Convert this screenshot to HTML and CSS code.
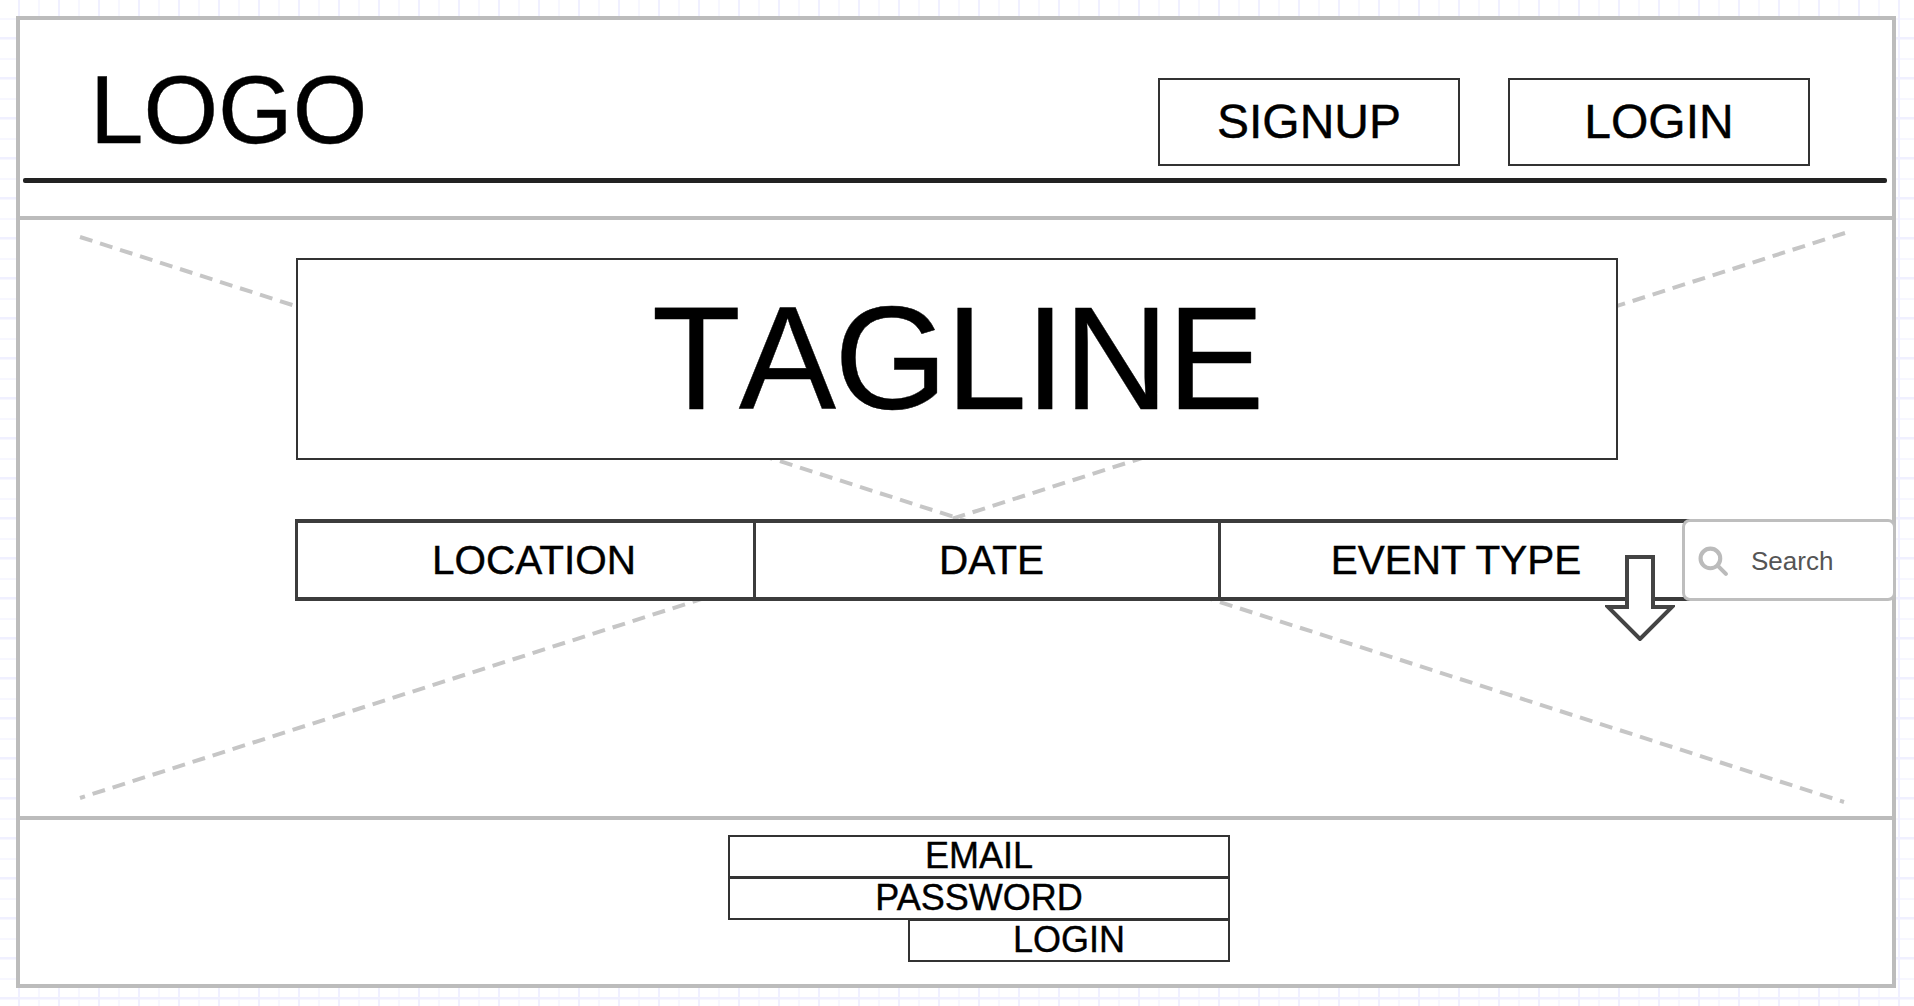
FILE: index.html
```html
<!DOCTYPE html>
<html lang="en">
<head>
    <meta charset="UTF-8">
    <meta name="viewport" content="width=device-width, initial-scale=1.0">
    <title>Wireframe</title>
    <link rel="stylesheet" href="styles.css">
</head>
<body>
    <div class="frame">
        <header class="header">
            <div class="header-row">
                <div class="logo">LOGO</div>
                <nav class="nav">
                    <a href="#" class="nav-button">SIGNUP</a>
                    <a href="#" class="nav-button">LOGIN</a>
                </nav>
            </div>
            <div class="header-rule"></div>
        </header>

        <section class="hero">
            <!-- image placeholder cross -->
            <svg class="hero-cross" viewBox="0 0 1872 597">
                <line x1="60" y1="17" x2="1824" y2="582"></line>
                <line x1="1825" y1="13" x2="60" y2="578"></line>
            </svg>

            <h1 class="tagline">TAGLINE</h1>

            <div class="filters">
                <div class="filter filter-first">LOCATION</div>
                <div class="filter filter-mid">DATE</div>
                <div class="filter filter-last">EVENT TYPE</div>
                <div class="search">
                    <svg class="search-icon" viewBox="0 0 30 30">
                        <circle cx="12" cy="12" r="9.5"></circle>
                        <line x1="19" y1="19" x2="27" y2="27"></line>
                    </svg>
                    <span>Search</span>
                </div>
            </div>

            <svg class="arrow" viewBox="0 0 70 86">
                <path d="M22 2H48V52H67L35 84L3 52H22Z"></path>
            </svg>
        </section>

        <footer class="footer">
            <div class="signin">
                <div class="field">EMAIL</div>
                <div class="field">PASSWORD</div>
                <div class="field field-short">LOGIN</div>
            </div>
        </footer>
    </div>
</body>
</html>
```

FILE: styles.css
```css
* {
    box-sizing: border-box;
}

body {
    margin: 0;
    height: 1006px;
    overflow: hidden;
    font-family: "Liberation Sans", Arial, sans-serif;
    color: #000;
    -webkit-text-stroke: 0.4px #000;
    background-color: #fff;
    background-image:
        linear-gradient(#f0f0ff 2px, transparent 2px),
        linear-gradient(90deg, #f0f0ff 2px, transparent 2px),
        linear-gradient(#f7f7ff 2px, transparent 2px),
        linear-gradient(90deg, #f7f7ff 2px, transparent 2px);
    background-size: 40px 40px, 40px 40px, 20px 20px, 20px 20px;
    background-position: 0 37px, 18px 0, 0 18px, 18px 0;
}

.frame {
    width: 1880px;
    height: 972px;
    margin: 16px 0 0 16px;
    background: #fff;
    border: 4px solid #bcbcbc;
}

.header {
    height: 200px;
    border-bottom: 4px solid #bcbcbc;
}

.header-row {
    display: flex;
    justify-content: space-between;
    padding: 42px 82px 0 70px;
}

.logo {
    font-size: 96px;
    line-height: 1;
}

.nav {
    display: flex;
    gap: 48px;
    margin-top: 16px;
}

.nav-button {
    display: flex;
    align-items: center;
    justify-content: center;
    width: 302px;
    height: 88px;
    padding-bottom: 2px;
    color: #000;
    font-size: 48px;
    text-decoration: none;
    border: 2px solid #333;
}

.header-rule {
    height: 5px;
    margin: 12px 5px 0 3px;
    background: #222;
    border-radius: 2px;
}

.hero {
    position: relative;
    height: 600px;
    padding: 38px 0 0 276px;
    border-bottom: 4px solid #bcbcbc;
}

.hero-cross {
    position: absolute;
    left: 0;
    top: 0;
    width: 1872px;
    height: 597px;
}

.hero-cross line {
    stroke: #c6c6c6;
    stroke-width: 4;
    stroke-dasharray: 13 8;
}

.tagline {
    position: relative;
    display: flex;
    align-items: center;
    justify-content: center;
    width: 1322px;
    height: 202px;
    margin: 0;
    font-size: 146px;
    font-weight: normal;
    line-height: 1;
    font-kerning: none;
    letter-spacing: -2px;
    background: #fff;
    border: 2px solid #333;
}

.filters {
    position: relative;
    display: flex;
    height: 82px;
    margin: 59px 0 0 -1px;
}

.filter {
    display: flex;
    flex: none;
    align-items: center;
    justify-content: center;
    height: 82px;
    margin-right: -3px;
    padding-left: 17px;
    font-size: 40.5px;
    background: #fff;
    border-style: solid;
    border-color: #3c3c3c;
    border-width: 4px 3px;
}

.filter-first {
    width: 461px;
}

.filter-mid {
    width: 468px;
    padding-left: 9px;
}

.filter-last {
    width: 478px;
    padding: 0 19px 0 17px;
}

.search {
    position: relative;
    display: flex;
    flex: none;
    align-items: center;
    width: 214px;
    height: 82px;
    margin-left: -11px;
    padding: 2px 0 0 13px;
    font-size: 26px;
    color: #555;
    -webkit-text-stroke: 0;
    background: #fff;
    border: 3px solid #bebebe;
    border-radius: 8px;
}

.search-icon {
    width: 31px;
    height: 31px;
    margin-right: 22px;
}

.search-icon circle,
.search-icon line {
    fill: none;
    stroke: #bbb;
    stroke-width: 4;
    stroke-linecap: round;
}

.arrow {
    position: absolute;
    left: 1585px;
    top: 335px;
    width: 70px;
    height: 86px;
}

.arrow path {
    fill: #fff;
    stroke: #444;
    stroke-width: 4;
}

.footer {
    padding: 15px 0 0 708px;
}

.signin {
    display: flex;
    flex-direction: column;
    width: 502px;
}

.field {
    display: flex;
    align-items: center;
    justify-content: center;
    height: 43px;
    margin-bottom: -1px;
    padding-bottom: 2px;
    font-size: 36px;
    line-height: 1;
    border: 2px solid #333;
}

.field-short {
    margin-left: 180px;
}
```
